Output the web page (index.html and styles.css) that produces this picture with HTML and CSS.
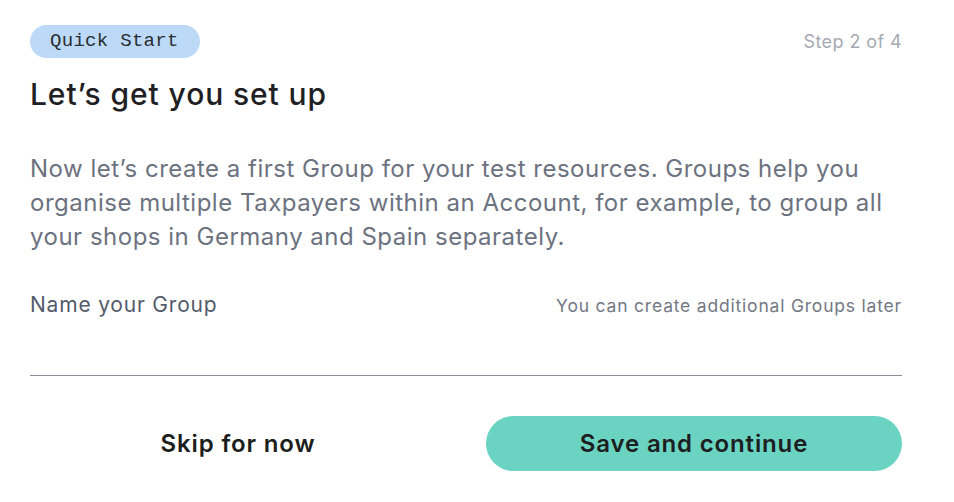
FILE: index.html
```html
<!DOCTYPE html>
<html lang="en">
<head>
<meta charset="utf-8">
<title>Quick Start</title>
<link rel="stylesheet" href="styles.css">
</head>
<body>
<main class="card">
  <header class="top">
    <span class="badge">Quick Start</span>
    <span class="step">Step 2 of 4</span>
  </header>
  <h1 class="title">Let’s get you set up</h1>
  <p class="intro">Now let’s create a first Group for your test resources. Groups help you organise multiple Taxpayers within an Account, for example, to group all your shops in Germany and Spain separately.</p>
  <div class="field">
    <div class="field-head">
      <label class="label" for="group">Name your Group</label>
      <span class="hint">You can create additional Groups later</span>
    </div>
    <input class="input" id="group" type="text">
  </div>
  <div class="actions">
    <button class="btn btn-ghost" type="button">Skip for now</button>
    <button class="btn btn-primary" type="button">Save and continue</button>
  </div>
</main>
</body>
</html>
```
FILE: styles.css
```css
* { box-sizing: border-box; }
html, body { margin: 0; padding: 0; background: #ffffff; }
body { font-family: "Inter", "DejaVu Sans", sans-serif; color: #1f2023; }
.card { width: 954px; padding: 25px 52px 0 30px; }
.top { display: flex; justify-content: space-between; align-items: center; }
.badge {
  font-family: "Liberation Mono", "DejaVu Sans Mono", monospace;
  font-size: 19px;
  letter-spacing: 0.3px;
  background: #bcdaf7;
  color: #2a2d33;
  border-radius: 17px;
  height: 33px;
  line-height: 33px;
  padding: 0 21px 0 20px;
}
.step { font-size: 18px; letter-spacing: 0.4px; color: #a6aab3; }
.title { font-size: 30px; font-weight: 500; margin: 16px 0 0; line-height: 40px; color: #1f2023; letter-spacing: 0.9px; }
.intro { font-size: 24px; line-height: 34px; color: #6c7280; margin: 38px 0 0; letter-spacing: 0.5px; }
.field { margin-top: 38px; }
.field-head { display: flex; justify-content: space-between; align-items: baseline; }
.label { font-size: 21px; line-height: 26px; letter-spacing: 0.8px; color: #545b6b; }
.hint { font-size: 17.5px; letter-spacing: 0.8px; color: #737884; }
.input {
  display: block; width: 100%; border: 0; border-bottom: 1.5px solid #8a8f9a;
  height: 58px; font-size: 20px; outline: none; padding: 0; background: transparent;
}
.actions { display: grid; grid-template-columns: 1fr 1fr; gap: 40px; margin-top: 40px; align-items: center; }
.btn { font-family: "Inter", "Liberation Sans", sans-serif; font-size: 24px; font-weight: 600; color: #1d1e20; border: 0; height: 55px; cursor: pointer; letter-spacing: 0.85px; }
.btn-ghost { background: transparent; }
.btn-primary { background: #6ad3c2; border-radius: 28px; }
```
